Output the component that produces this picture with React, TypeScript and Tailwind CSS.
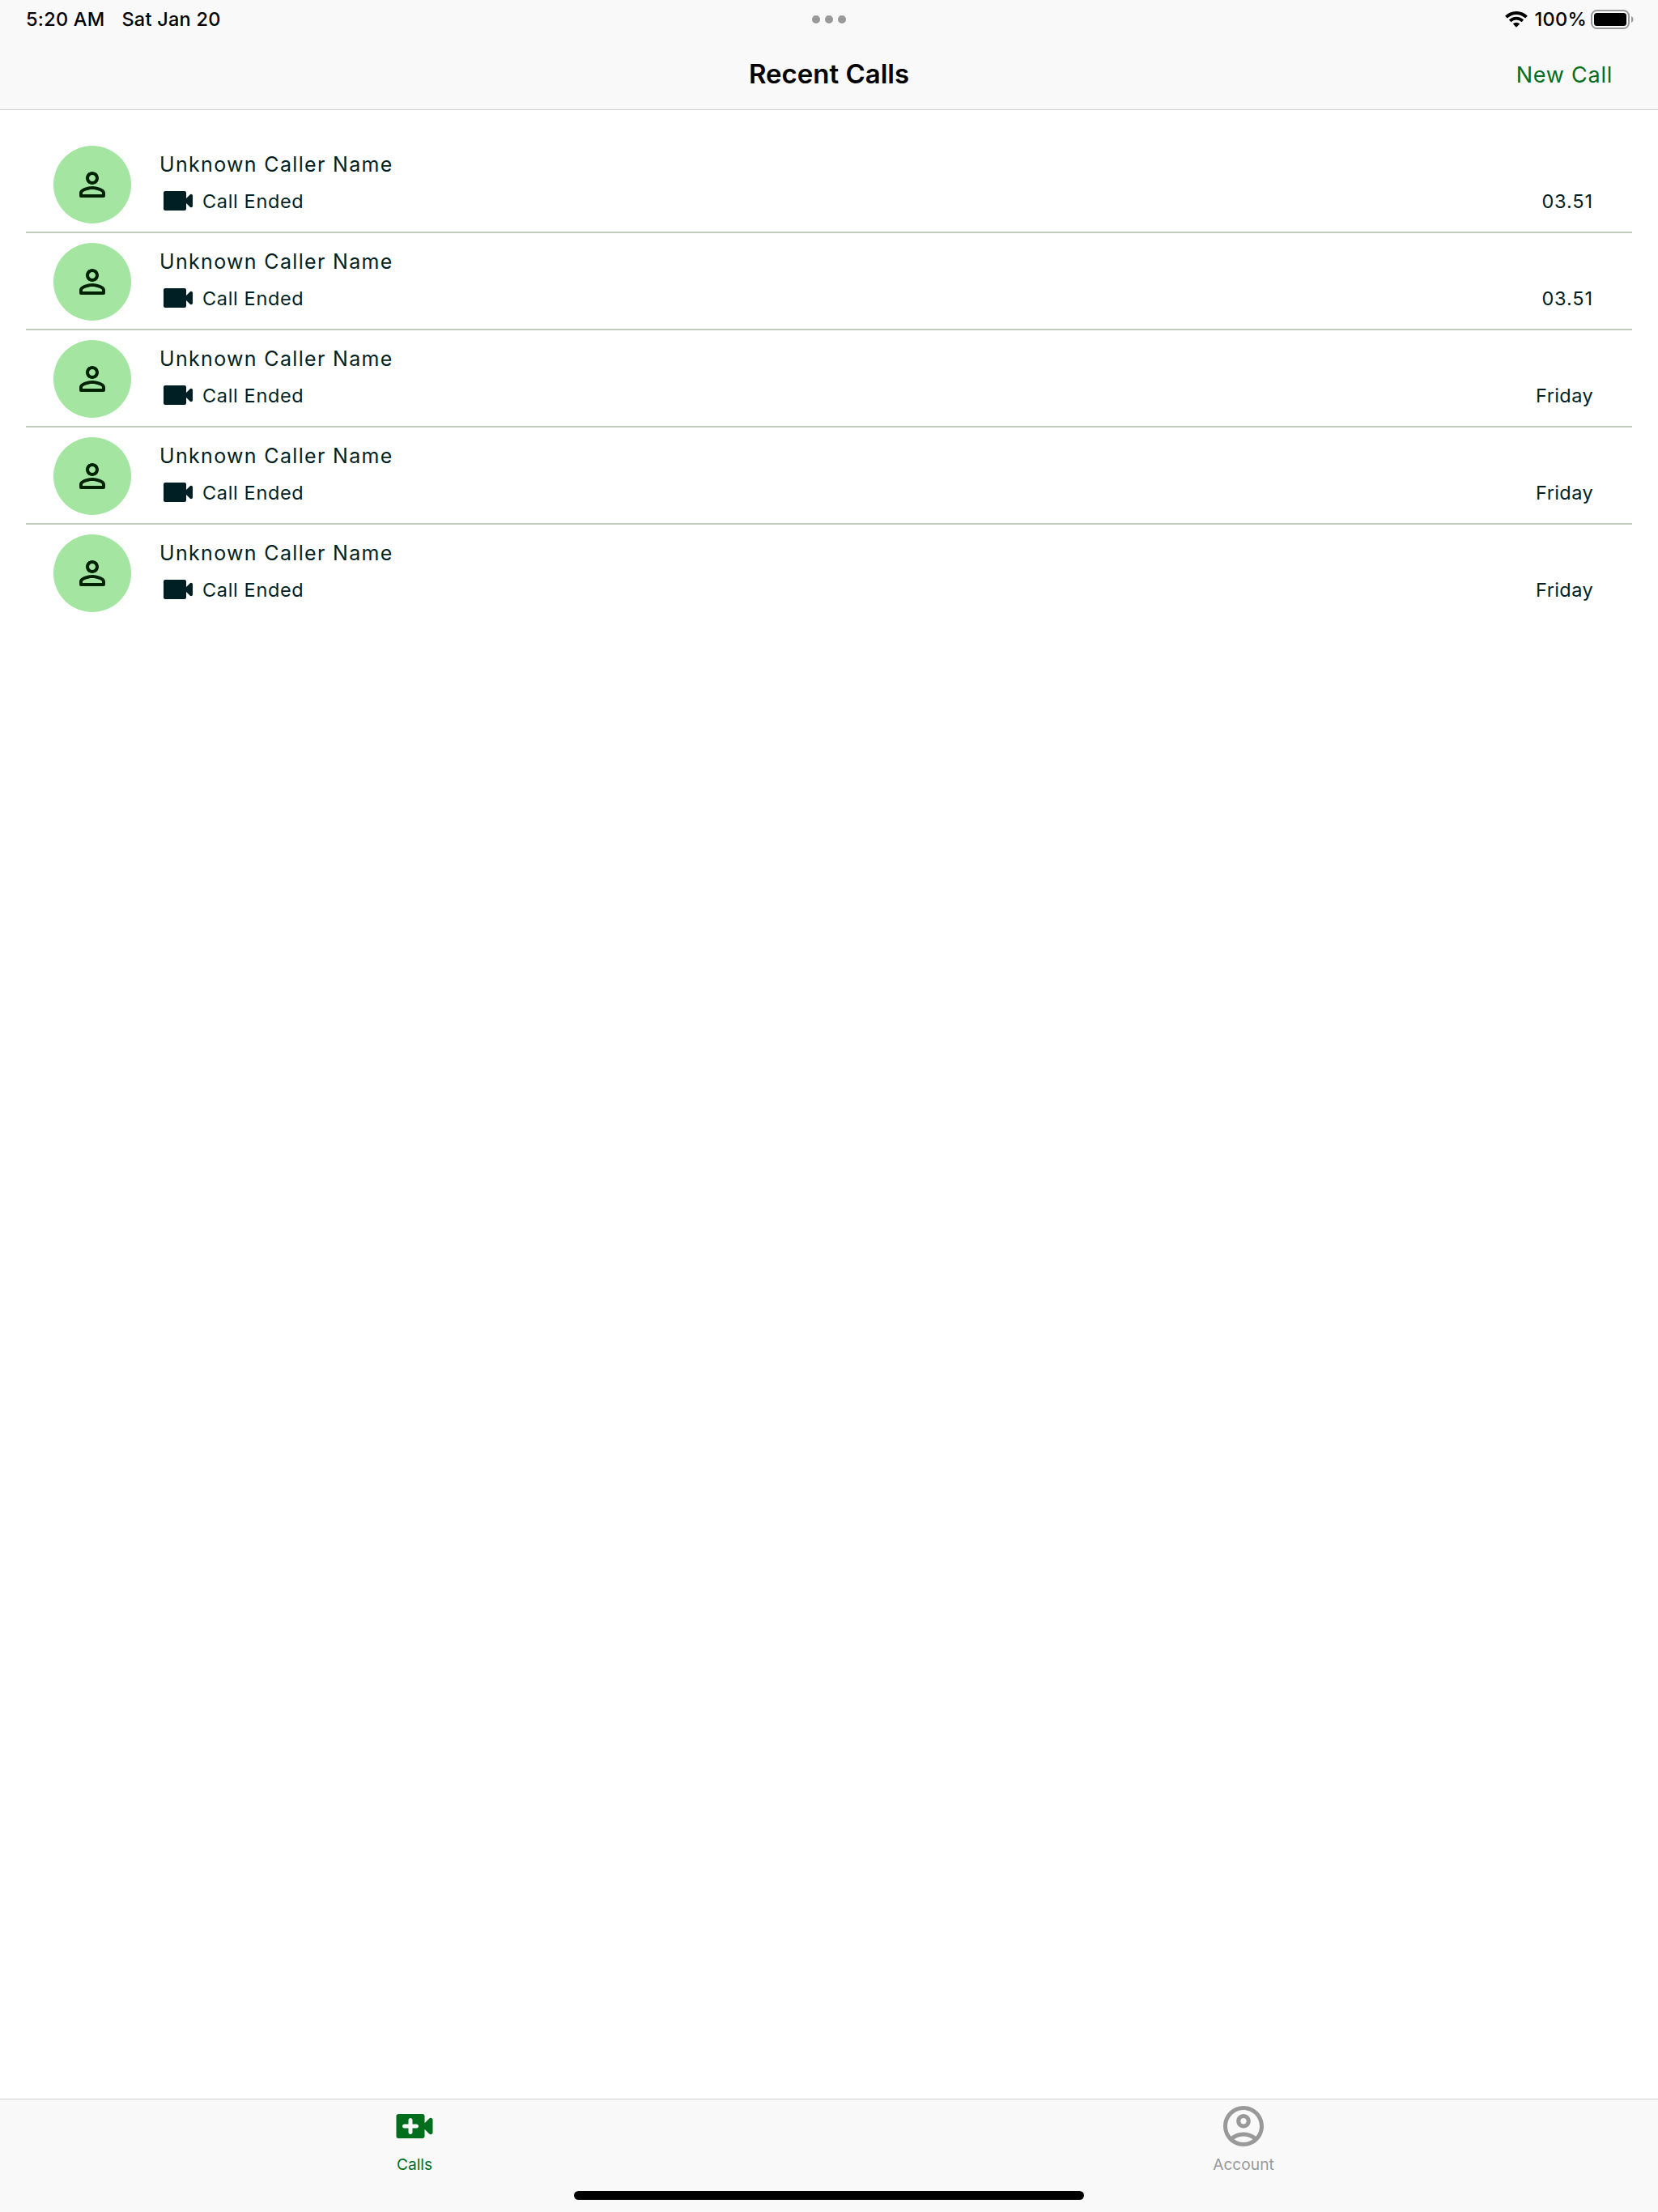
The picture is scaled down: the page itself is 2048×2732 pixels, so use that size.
const calls = [
  { name: "Unknown Caller Name", status: "Call Ended", time: "03.51" },
  { name: "Unknown Caller Name", status: "Call Ended", time: "03.51" },
  { name: "Unknown Caller Name", status: "Call Ended", time: "Friday" },
  { name: "Unknown Caller Name", status: "Call Ended", time: "Friday" },
  { name: "Unknown Caller Name", status: "Call Ended", time: "Friday" },
];

function PersonIcon() {
  return (
    <svg viewBox="0 0 24 24" className="size-12 fill-[#002204]">
      <path d="M12 6c1.1 0 2 .9 2 2s-.9 2-2 2-2-.9-2-2 .9-2 2-2m0 9c2.7 0 5.8 1.29 6 2v1H6v-.99c.2-.72 3.3-2.01 6-2.01m0-11C9.79 4 8 5.79 8 8s1.79 4 4 4 4-1.79 4-4-1.79-4-4-4zm0 9c-2.67 0-8 1.34-8 4v2c0 .55.45 1 1 1h14c.55 0 1-.45 1-1v-2c0-2.66-5.33-4-8-4z" />
    </svg>
  );
}

function VideoIcon() {
  return (
    <svg viewBox="0 0 24 24" className="size-12 fill-[#001f24]">
      <path d="M17 10.5V7c0-.55-.45-1-1-1H4c-.55 0-1 .45-1 1v10c0 .55.45 1 1 1h12c.55 0 1-.45 1-1v-3.5l2.29 2.29c.63.63 1.71.18 1.71-.71V8.91c0-.89-1.08-1.34-1.71-.71L17 10.5z" />
    </svg>
  );
}

function VideoCallIcon() {
  return (
    <svg viewBox="0 0 24 24" className="size-[60px] fill-[#006e1c]">
      <path
        fillRule="evenodd"
        d="M17 10.5V7c0-.55-.45-1-1-1H4c-.55 0-1 .45-1 1v10c0 .55.45 1 1 1h12c.55 0 1-.45 1-1v-3.5l2.29 2.29c.63.63 1.71.18 1.71-.71V8.91c0-.89-1.08-1.34-1.71-.71L17 10.5zM13 13h-2v2c0 .55-.45 1-1 1s-1-.45-1-1v-2H7c-.55 0-1-.45-1-1s.45-1 1-1h2V9c0-.55.45-1 1-1s1 .45 1 1v2h2c.55 0 1 .45 1 1s-.45 1-1 1z"
      />
    </svg>
  );
}

function AccountIcon() {
  return (
    <svg viewBox="0 0 24 24" className="size-[60px] fill-[#999999]">
      <path d="M12 2C6.48 2 2 6.48 2 12s4.48 10 10 10 10-4.48 10-10S17.52 2 12 2zM7.35 18.5C8.66 17.56 10.26 17 12 17s3.34.56 4.65 1.5C15.34 19.44 13.74 20 12 20s-3.34-.56-4.65-1.5zm10.79-1.38C16.45 15.8 14.32 15 12 15s-4.45.8-6.14 2.12C4.7 15.73 4 13.95 4 12c0-4.42 3.58-8 8-8s8 3.58 8 8c0 1.95-.7 3.73-1.86 5.12zM12 6c-1.93 0-3.5 1.57-3.5 3.5S10.07 13 12 13s3.5-1.57 3.5-3.5S13.93 6 12 6zm0 5c-.83 0-1.5-.67-1.5-1.5S11.17 8 12 8s1.5.67 1.5 1.5S12.83 11 12 11z" />
    </svg>
  );
}

function WifiIcon() {
  return (
    <svg viewBox="0 0 28 20" className="h-5 w-7">
      <g fill="none" stroke="#000">
        <path d="M1.5 7.2a17.5 17.5 0 0 1 25 0" strokeWidth="3.9" />
        <path d="M6.2 11.9a11 11 0 0 1 15.6 0" strokeWidth="3.7" />
      </g>
      <path d="M14 19.7l4.2-4.2a6 6 0 0 0-8.4 0z" />
    </svg>
  );
}

function BatteryIcon() {
  return (
    <svg viewBox="0 0 53 24" className="h-6 w-[53px]">
      <rect x="1" y="1" width="46" height="22" rx="6.5" fill="none" stroke="#999" strokeWidth="2" />
      <rect x="4" y="4" width="40" height="16" rx="3.5" />
      <path d="M50 8c3.3 1.3 3.3 6.7 0 8z" fill="#999" />
    </svg>
  );
}

function StatusBar() {
  return (
    <div className="grid h-12 grid-cols-3 px-[30px] text-[23.5px] leading-12 font-medium tracking-[0.25px] text-black">
      <div className="flex gap-[21px] pl-0.5 whitespace-nowrap">
        <span>5:20 AM</span>
        <span>Sat Jan 20</span>
      </div>
      <div className="flex items-center justify-center gap-1.5">
        <i className="size-2.5 rounded-full bg-[#999]" />
        <i className="size-2.5 rounded-full bg-[#999]" />
        <i className="size-2.5 rounded-full bg-[#999]" />
      </div>
      <div className="flex items-center justify-end">
        <WifiIcon />
        <span className="mr-[5px] ml-[9px]">100%</span>
        <BatteryIcon />
      </div>
    </div>
  );
}

export default function App() {
  return (
    <div className="flex h-[2732px] w-[2048px] flex-col bg-white font-['Inter',sans-serif]">
      <header className="h-34 border-b border-[#cfcfcf] bg-[#f9f9f9]">
        <StatusBar />
        <div className="grid h-[87px] grid-cols-3 items-center pr-14 pl-14">
          <span />
          <h1 className="pt-px text-center text-[33px] font-[570] text-black">Recent Calls</h1>
          <button className="pt-1 text-right text-[27px] tracking-[0.75px] text-[#006e1c]">New Call</button>
        </div>
      </header>

      <main className="flex-1 px-8 pt-8">
        {calls.map((call, i) => (
          <div
            key={i}
            className="flex h-30 border-b-2 border-[#c2c9bd] pr-12 pl-[34px] text-[#001f24] last:border-transparent"
          >
            <div className="mt-3 flex size-24 items-center justify-center rounded-full bg-[#a3e5a1]">
              <PersonIcon />
            </div>
            <div className="ml-[34px] flex-1">
              <div className="h-14 pt-[19px] pl-px text-[25px] leading-8 tracking-[1.33px]">{call.name}</div>
              <div className="flex h-12 items-center">
                <VideoIcon />
                <span className="ml-1.5 pt-0.5 text-[23.5px] tracking-[0.65px]">{call.status}</span>
                <span
                  className={
                    call.time === "Friday"
                      ? "ml-auto pt-0.5 text-[23.5px] tracking-[0.4px]"
                      : "ml-auto pt-0.5 text-[23.5px] tracking-[0.9px]"
                  }
                >
                  {call.time}
                </span>
              </div>
            </div>
          </div>
        ))}
      </main>

      <footer className="flex h-35 flex-col border-t border-[#cfcfcf] bg-[#f9f9f9]">
        <nav className="grid h-[113px] grid-cols-2 pt-[3px]">
          <div className="flex flex-col items-center text-[#006e1c]">
            <VideoCallIcon />
            <span className="text-[19.2px] leading-[34px]">Calls</span>
          </div>
          <div className="flex flex-col items-center text-[#999999]">
            <AccountIcon />
            <span className="text-[19.2px] leading-[34px]">Account</span>
          </div>
        </nav>
        <div className="mx-auto h-[11px] w-[630px] rounded-full bg-black" />
      </footer>
    </div>
  );
}
